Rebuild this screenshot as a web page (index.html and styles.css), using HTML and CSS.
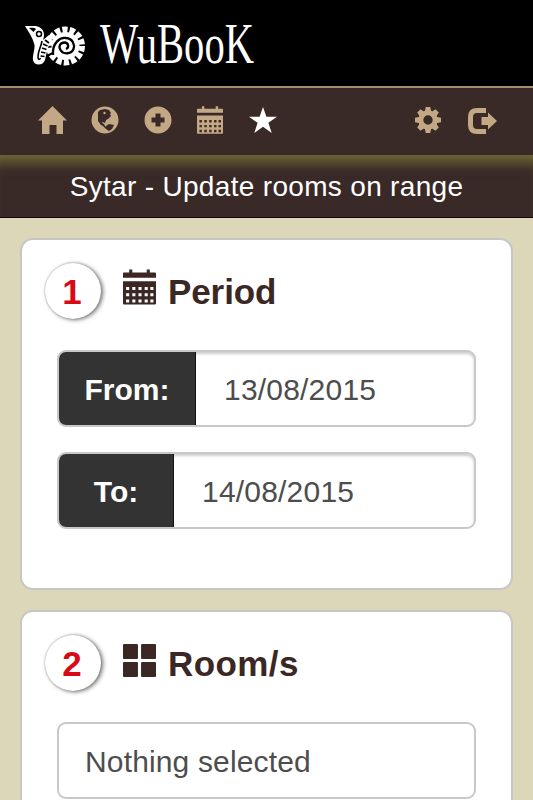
FILE: index.html
```html
<!DOCTYPE html>
<html lang="en">
<head>
<meta charset="utf-8">
<title>WuBook</title>
<link rel="stylesheet" href="styles.css">
</head>
<body>
<svg width="0" height="0" class="defs">
  <symbol id="calendar" viewBox="0 0 32 34">
    <path fill-rule="evenodd" d="M0 8V4q0-1 1-1h5V0h3v3h14V0h3v3h5q1 0 1 1v4zM0 11.500h32V33q0 1-1 1H1q-1 0-1-1zM3 17v3h3v-3zM9 17v3h3v-3zM15 17v3h3v-3zM21 17v3h3v-3zM26.500 17v3h3v-3zM3 23v3h3v-3zM9 23v3h3v-3zM15 23v3h3v-3zM21 23v3h3v-3zM26.500 23v3h3v-3zM3 29v3h3v-3zM9 29v3h3v-3zM15 29v3h3v-3zM21 29v3h3v-3zM26.500 29v3h3v-3z"/>
  </symbol>
</svg>
<header class="brand">
  <svg class="emblem" viewBox="0 0 60 40">
    <circle cx="40.500" cy="20" r="16.500" fill="none" stroke="#fff" stroke-width="6" stroke-dasharray="5.300 2.105"/>
    <circle cx="40.500" cy="20" r="14" fill="#fff"/>
    <path d="M28 29C27 17 35 11 41 12c7 .5 9 7 7.500 11-2 5-10 6-13 1-2.500-4 0-7.500 4-7.500 4 0 5 5 1.500 6.500" fill="none" stroke="#000" stroke-width="2.300"/>
    <path d="M0 0c5-.8 10-.8 14 1 3 1.500 5 4 5 8 0 2-.5 3-1 5l6-5 4 6c-4 3-5 6-6 10l-2 9c-2 6-11 6-12 0-.7-5 2-10 1.500-15C8 12 3 5 0 0z" fill="#fff"/>
    <path d="M4 2c3-.5 6 0 7 1L8.500 6z"/>
    <circle cx="14" cy="8" r="2.500" fill="none" stroke="#000" stroke-width="1.500"/>
    <path d="M17 15c-1 6-4 10-4 16 0 3 1.500 3 2.500 1M20 14l4 3M18 18l4.500 2M17 22l4.500 1.500M16 26l4.500 1M15.500 30l4 .5" fill="none" stroke="#000" stroke-width="1.600"/>
  </svg>
  <svg class="wordmark" viewBox="0 0 160 50"><text x="0" y="41" textLength="154" lengthAdjust="spacingAndGlyphs">WuBooK</text></svg>
</header>
<nav class="toolbar">
  <svg class="home" viewBox="0 0 29 28"><path d="M14.500 0 29 14.500h-4V28h-6.500v-9h-7v9H4V14.500H0z"/></svg>
  <svg class="globe" viewBox="0 0 28 28"><circle cx="14" cy="14" r="13.500"/><path class="land" d="M7 6l2-2 5-1 4 1 2 3-1 1 1 2-3 3-2 1-1 3-2-1-1 1 2 1 1 2 2 2-1 1-3-3-2-1-3-4V9zM15 20l3-2 5 1-2 4-3 2-3-2z"/><circle cx="13.500" cy="7" r="1.200"/></svg>
  <svg class="plus" viewBox="0 0 28 28"><path fill-rule="evenodd" d="M14 .5a13.500 13.500 0 1 0 0 27 13.500 13.500 0 0 0 0-27zM11.500 7.500h5v4h4v5h-4v4h-5v-4h-4v-5h4z"/></svg>
  <svg class="cal"><use href="#calendar"/></svg>
  <svg class="star" viewBox="0 0 28 26"><path d="M14 0l3.400 9.700H28l-8.600 6.100L22.700 26 14 19.700 5.300 26l3.300-10.200L0 9.700h10.600z"/></svg>
  <svg class="gear" viewBox="-13 -13 26 26"><g id="teeth"><path id="tooth" d="M-2.300-13h4.600l1 5h-6.600z"/><use href="#tooth" transform="rotate(45)"/><use href="#tooth" transform="rotate(90)"/><use href="#tooth" transform="rotate(135)"/></g><use href="#teeth" transform="rotate(180)"/><circle r="7.200" fill="none" stroke="#c3a886" stroke-width="5"/></svg>
  <svg class="exit" viewBox="0 0 29 26"><path d="M18 2.500H9Q2.500 2.500 2.500 9v8q0 6.500 6.500 6.500h9" fill="none" stroke="#c3a886" stroke-width="5"/><path d="M13.500 9H20V4.500l9 8.500-9 8.500V17h-6.500z"/></svg>
</nav>
<h1 class="title"><span>Sytar - Update rooms on range</span></h1>
<main>
  <section class="card period">
    <h2><span class="step">1</span><svg class="heading-icon"><use href="#calendar"/></svg><span class="label">Period</span></h2>
    <div class="field"><span class="addon from">From:</span><span class="value date">13/08/2015</span></div>
    <div class="field"><span class="addon to">To:</span><span class="value date">14/08/2015</span></div>
  </section>
  <section class="card">
    <h2><span class="step">2</span><svg class="heading-icon rooms" viewBox="0 0 32 32"><rect width="14.500" height="14.500" rx="1"/><rect x="17.500" width="14.500" height="14.500" rx="1"/><rect y="17.500" width="14.500" height="14.500" rx="1"/><rect x="17.500" y="17.500" width="14.500" height="14.500" rx="1"/></svg><span class="label wide">Room/s</span></h2>
    <div class="field select"><span class="value">Nothing selected</span></div>
  </section>
</main>
</body>
</html>
```
FILE: styles.css
```css
* { box-sizing: border-box; }
html { overflow: hidden; }
body { margin: 0; height: 800px; overflow: hidden; background: #dcd7b8; font-family: "Liberation Sans", Arial, sans-serif; }
svg { display: block; flex: none; }
.defs { display: none; }
.brand { height: 86px; background: #000; display: flex; padding: 26px 0 0 25px; }
.emblem { width: 60px; height: 40px; }
.wordmark { width: 160px; height: 50px; margin: -4px 0 0 15px; overflow: visible; }
.wordmark text { font: 56px "Liberation Serif", serif; fill: #fff; }
.toolbar { height: 69px; background: #392927; border-top: 2px solid #a98d73; display: flex; padding: 18px 36px 0 38px; fill: #c3a886; }
.home { width: 29px; height: 28px; }
.globe { width: 28px; height: 28px; margin-left: 24px; }
.land { fill: #392927; }
.plus { width: 28px; height: 28px; margin-left: 25px; }
.cal { width: 26px; height: 28px; margin-left: 25px; }
.star { width: 28px; height: 26px; margin: 1px 0 0 26px; fill: #fff; }
.gear { width: 26px; height: 26px; margin: 1px 27px 0 auto; }
.exit { width: 29px; height: 26px; margin-top: 2px; }
.title { margin: 0; height: 63px; background: #392927; border-bottom: 1px solid #160503; box-shadow: inset 0 17px 14px -10px #756b37; color: #fff; font-size: 28px; font-weight: 400; letter-spacing: .32px; line-height: 64px; text-align: center; white-space: nowrap; }
main { height: 582px; overflow: hidden; padding: 20px 20px 0; display: grid; grid-auto-rows: 352px; gap: 20px; }
.card { width: 493px; height: 352px; background: #fff; border: 2px solid #c6c6c8; border-radius: 13px; padding: 22px 35px 0; }
.card:last-child { height: 190px; border-bottom: 0; border-radius: 13px 13px 0 0; }
h2 { height: 60px; margin: 0 0 28px -12px; display: flex; color: #3b2723; font-size: 35px; line-height: 59px; }
.step { width: 56px; height: 56px; margin-top: 1px; border-radius: 50%; color: #d70a16; text-align: center; line-height: 57px; box-shadow: 2px 1px 4px #777, 0 0 2px #aaa; text-indent: -2px; }
.heading-icon { width: 33px; height: 36px; margin: 7px 0 0 22px; fill: #3b2723; }
.rooms { height: 33px; margin-top: 10px; }
.label { margin-left: 12px; letter-spacing: -.1px; }
.wide { letter-spacing: .4px; }
.field { width: 419px; height: 77px; border: 2px solid #c8c8c8; border-radius: 9px; display: flex; overflow: hidden; margin-bottom: 25px; box-shadow: inset 0 2px 3px #ccc; font-size: 30px; line-height: 75px; color: #4d4d4d; }
.addon { background: #333; color: #fff; font-weight: 700; text-align: center; border-right: 1px solid #111; }
.from { width: 137px; }
.to { width: 115px; }
.value { margin-left: 28px; white-space: nowrap; }
.date { letter-spacing: .2px; }
.select { box-shadow: none; }
.select .value { margin-left: 26px; letter-spacing: .15px; }
```
